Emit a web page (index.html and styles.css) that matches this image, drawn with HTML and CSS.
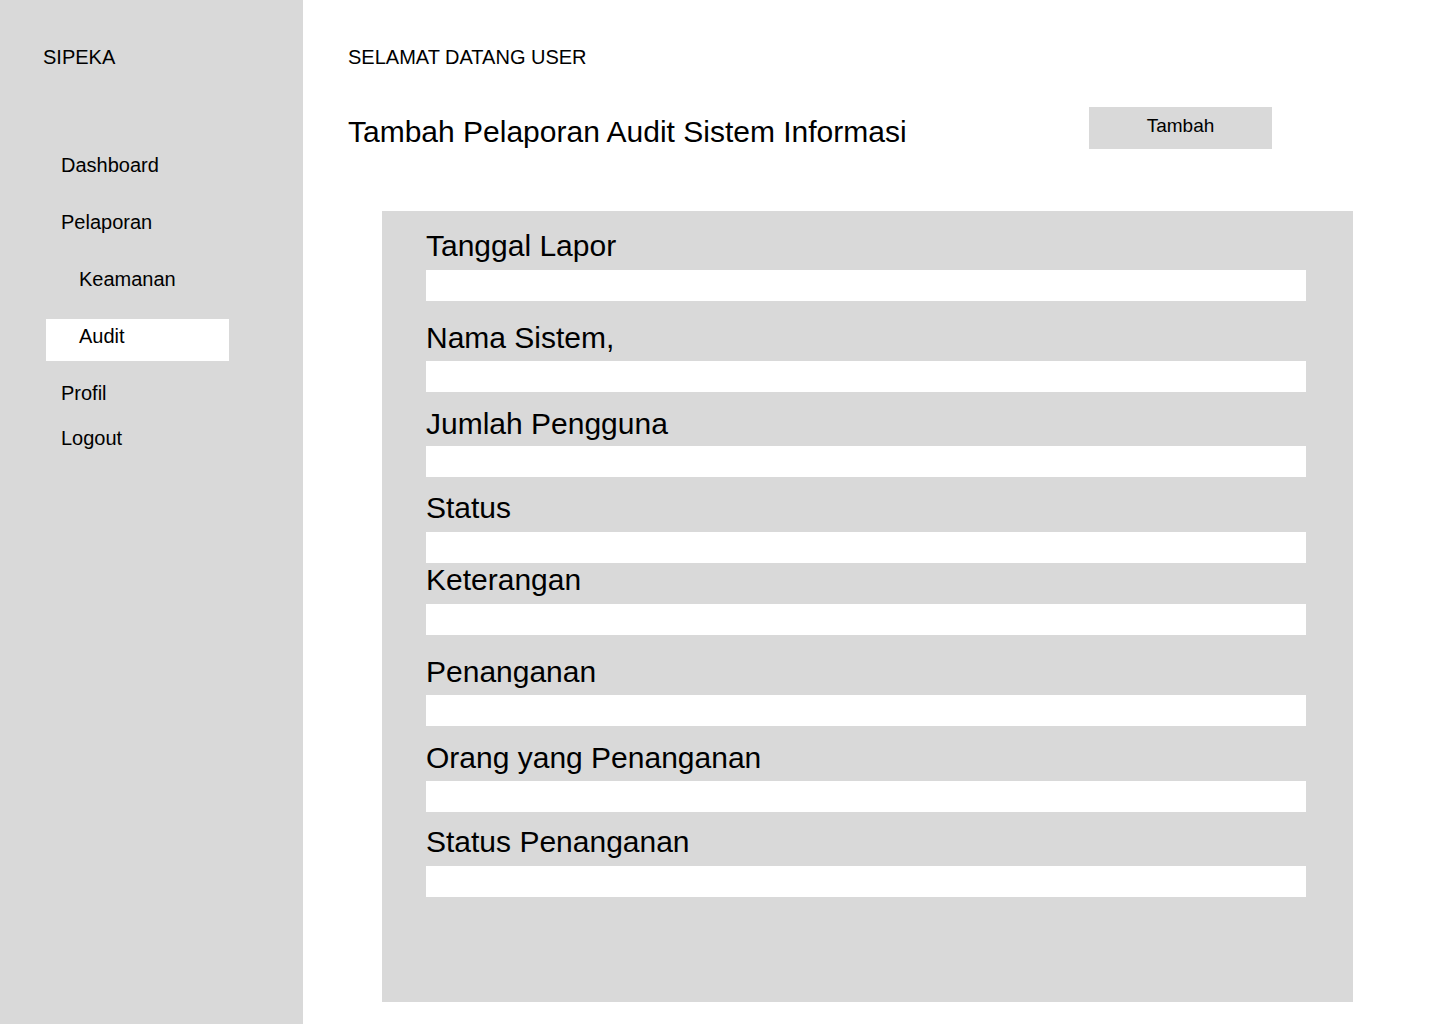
FILE: index.html
```html
<!DOCTYPE html>
<html lang="id">
<head>
<meta charset="utf-8">
<title>SIPEKA - Tambah Pelaporan Audit</title>
<link rel="stylesheet" href="styles.css">
</head>
<body>
<div class="layout">
  <aside class="sidebar">
    <div class="brand">SIPEKA</div>
    <nav class="nav">
      <a class="nav-item item-dashboard">Dashboard</a>
      <a class="nav-item item-gap">Pelaporan</a>
      <a class="nav-item nav-sub item-gap">Keamanan</a>
      <a class="nav-item nav-sub nav-active item-gap">Audit</a>
      <a class="nav-item item-gap">Profil</a>
      <a class="nav-item item-gap-sm">Logout</a>
    </nav>
  </aside>
  <main class="main">
    <div class="welcome">SELAMAT DATANG USER</div>
    <div class="title-row">
      <h1 class="title">Tambah Pelaporan Audit Sistem Informasi</h1>
      <button class="btn-add">Tambah</button>
    </div>
    <form class="panel">
      <div class="field f1"><label class="label">Tanggal Lapor</label><div class="input"></div></div>
      <div class="field f2"><label class="label">Nama Sistem,</label><div class="input"></div></div>
      <div class="field f3"><label class="label">Jumlah Pengguna</label><div class="input"></div></div>
      <div class="field f4"><label class="label">Status</label><div class="input"></div></div>
      <div class="field f5"><label class="label">Keterangan</label><div class="input"></div></div>
      <div class="field f6"><label class="label">Penanganan</label><div class="input"></div></div>
      <div class="field f7"><label class="label">Orang yang Penanganan</label><div class="input"></div></div>
      <div class="field f8"><label class="label">Status Penanganan</label><div class="input"></div></div>
    </form>
  </main>
</div>
</body>
</html>
```

FILE: styles.css
```css
* { box-sizing: border-box; }
html, body {
  margin: 0;
  padding: 0;
  background: #ffffff;
  color: #000000;
  font-family: "Liberation Sans", Arial, sans-serif;
}
.layout {
  display: flex;
  width: 1440px;
  height: 1024px;
  overflow: hidden;
}
.sidebar {
  width: 303px;
  flex: 0 0 303px;
  height: 1024px;
  background: #d9d9d9;
  padding-top: 46px;
}
.brand {
  font-size: 20px;
  line-height: 23px;
  padding-left: 43px;
}
.nav {
  display: flex;
  flex-direction: column;
  margin-top: 79px;
  margin-left: 46px;
  width: 183px;
}
.nav-item {
  display: block;
  height: 42px;
  font-size: 20px;
  line-height: 23px;
  padding: 6px 0 13px 15px;
  color: #000;
  text-decoration: none;
}
.nav-sub { padding-left: 33px; }
.nav-active { background: #ffffff; }
.item-gap { margin-top: 15px; }
.item-gap-sm { margin-top: 3px; }

.main {
  flex: 1;
  padding-left: 45px;
  padding-top: 46px;
}
.welcome {
  font-size: 20px;
  line-height: 23px;
}
.title-row {
  display: flex;
  justify-content: space-between;
  align-items: flex-start;
  width: 924px;
  margin-top: 38px;
}
.title {
  margin: 8px 0 0 0;
  font-size: 30px;
  font-weight: normal;
  line-height: 34px;
}
.btn-add {
  width: 183px;
  height: 42px;
  border: none;
  background: #d9d9d9;
  font-family: "Liberation Sans", Arial, sans-serif;
  font-size: 19px;
  line-height: 23px;
  padding: 7px 0 12px 0;
  color: #000;
  text-align: center;
}
.panel {
  margin: 62px 0 0 34px;
  width: 971px;
  height: 791px;
  background: #d9d9d9;
  padding: 18px 0 0 44px;
  display: flex;
  flex-direction: column;
}
.label {
  display: block;
  font-size: 30px;
  line-height: 34px;
  margin-bottom: 7px;
}
.input {
  width: 880px;
  height: 31px;
  background: #ffffff;
}
.f2 { margin-top: 20px; }
.f2 .label { margin-bottom: 6px; }
.f3 { margin-top: 15px; }
.f3 .label { margin-bottom: 5px; }
.f4 { margin-top: 14px; }
.f5 { margin-top: 0; }
.f6 { margin-top: 20px; }
.f6 .label { margin-bottom: 6px; }
.f7 { margin-top: 15px; }
.f7 .label { margin-bottom: 6px; }
.f8 { margin-top: 13px; }
```
